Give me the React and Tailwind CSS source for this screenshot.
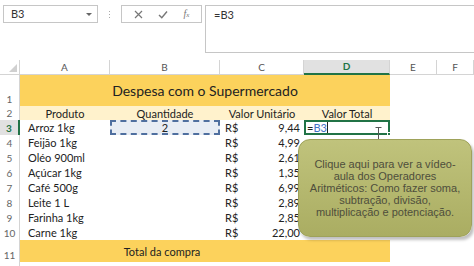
import React from 'react';

const items = [
  { name: 'Arroz 1kg', price: '9,44' },
  { name: 'Feijão 1kg', price: '4,99' },
  { name: 'Oléo 900ml', price: '2,61' },
  { name: 'Açúcar 1kg', price: '1,35' },
  { name: 'Café 500g', price: '6,99' },
  { name: 'Leite 1 L', price: '2,89' },
  { name: 'Farinha 1kg', price: '2,85' },
  { name: 'Carne 1kg', price: '22,00' },
];

const cols = [
  { key: 'A', w: 'w-[90px]' },
  { key: 'B', w: 'w-[110px]' },
  { key: 'C', w: 'w-[84px]' },
  { key: 'D', w: 'w-[86px]' },
  { key: 'E', w: 'w-[47px]' },
  { key: 'F', w: 'w-[37px]' },
];

function RowNum({ n, active, bottom }) {
  return (
    <div
      className={`w-[20px] shrink-0 flex justify-center text-[10px] leading-none ${
        bottom ? 'items-end pb-[2px]' : 'items-center'
      } ${
        active
          ? 'bg-[#e1e1e1] text-[#217346] font-bold border-r-2 border-[#217346]'
          : 'text-[#666] border-r border-[#d4d4d4]'
      }`}
    >
      {n}
    </div>
  );
}

export default function App() {
  return (
    <div className="w-[474px] h-[266px] overflow-hidden bg-white relative font-['Lato',sans-serif] text-[#222]">
      {/* Formula bar */}
      <div className="flex h-[60px] items-start pt-[5px] pl-[3px]">
        <div className="w-[95px] h-[18px] border border-[#c6c6c6] flex items-center justify-between pl-[7px] pr-[5px] text-[11px] text-[#333]">
          <span>B3</span>
          <span className="w-0 h-0 border-l-[3px] border-r-[3px] border-t-[3px] border-l-transparent border-r-transparent border-t-[#666]" />
        </div>
        <div className="w-[23px] h-[18px] flex flex-col items-center justify-center gap-[2px]">
          <span className="w-[1px] h-[1px] bg-[#aaa]" />
          <span className="w-[1px] h-[1px] bg-[#aaa]" />
          <span className="w-[1px] h-[1px] bg-[#aaa]" />
        </div>
        <div className="w-[81px] h-[18px] border border-[#c6c6c6] flex items-center justify-around px-[4px] text-[#777]">
          <svg width="9" height="9" viewBox="0 0 9 9">
            <path d="M1 1 L8 8 M8 1 L1 8" stroke="#777" strokeWidth="1.2" />
          </svg>
          <svg width="10" height="9" viewBox="0 0 10 9">
            <path d="M1 5 L3.8 7.8 L9 1.5" stroke="#777" strokeWidth="1.4" fill="none" />
          </svg>
          <span className="font-['Liberation_Serif',serif] italic text-[10px] leading-none">
            f<span className="text-[7px]">x</span>
          </span>
        </div>
        <div className="ml-[3px] flex-1 h-[48px] border border-r-0 border-[#c6c6c6] pl-[8px] pt-[1px] text-[11px] text-[#333]">
          =B3
        </div>
      </div>

      {/* Column headers */}
      <div className="flex h-[15px]">
        <div className="w-[20px] shrink-0 flex items-end justify-end pr-[2px] pb-[2px] border-r border-b border-[#d4d4d4]">
          <svg width="8" height="8" viewBox="0 0 8 8">
            <path d="M8 0 L8 8 L0 8 Z" fill="#d0d0d0" />
          </svg>
        </div>
        {cols.map((c) => (
          <div
            key={c.key}
            className={`${c.w} shrink-0 flex items-center justify-center text-[10px] ${
              c.key === 'D'
                ? 'bg-[#e1e1e1] text-[#217346] font-bold border-b-2 border-[#217346] border-r border-r-[#d4d4d4]'
                : 'text-[#555] border-r border-b border-[#d4d4d4]'
            }`}
          >
            {c.key}
          </div>
        ))}
      </div>

      {/* Row 1 */}
      <div className="flex h-[31px]">
        <RowNum n={1} bottom />
        <div className="w-[370px] shrink-0 bg-[#fcd25c] flex items-center justify-center text-[14px] text-[#222]">
          Despesa com o Supermercado
        </div>
      </div>

      {/* Row 2 */}
      <div className="flex h-[14px] text-[11px] leading-none">
        <RowNum n={2} />
        <div className="w-[90px] shrink-0 bg-[#fff2cc] flex items-center justify-center">Produto</div>
        <div className="w-[110px] shrink-0 bg-[#fff2cc] flex items-center justify-center">Quantidade</div>
        <div className="w-[84px] shrink-0 bg-[#fff2cc] flex items-center justify-center">Valor Unitário</div>
        <div className="w-[86px] shrink-0 bg-[#fff2cc] flex items-center justify-center">Valor Total</div>
      </div>

      {/* Rows 3-10 */}
      {items.map((it, i) => {
        const first = i === 0;
        return (
          <div key={it.name} className="flex h-[15px] text-[11px] leading-none">
            <RowNum n={i + 3} active={first} />
            <div className="w-[90px] shrink-0 flex items-center pl-[8px]">{it.name}</div>
            {first ? (
              <div className="w-[110px] shrink-0 flex items-center justify-center border-2 border-dashed border-[#4f6f9f] bg-[#e8edf4]">
                2
              </div>
            ) : (
              <div className="w-[110px] shrink-0" />
            )}
            <div className="w-[84px] shrink-0 flex items-center justify-between pl-[5px] pr-[4px]">
              <span>R$</span>
              <span>{it.price}</span>
            </div>
            {first ? (
              <div className="w-[86px] shrink-0 flex items-center border-2 border-[#217346] pl-[1px] relative">
                <span>=</span>
                <span className="text-[#4472c4]">B3</span>
                <span className="w-[1px] h-[11px] bg-[#222]" />
                <span className="absolute -right-[3px] -bottom-[3px] w-[4px] h-[4px] bg-[#217346] border border-white" />
              </div>
            ) : (
              <div className="w-[86px] shrink-0" />
            )}
          </div>
        );
      })}

      {/* Row 11 */}
      <div className="flex h-[22px] text-[11px] leading-none">
        <RowNum n={11} bottom />
        <div className="w-[284px] shrink-0 bg-[#fcd25c] flex items-center justify-center">Total da compra</div>
        <div className="w-[86px] shrink-0 bg-[#fcd25c]" />
      </div>

      {/* Row 12 */}
      <div className="flex h-[10px]">
        <RowNum n="" />
      </div>

      {/* Text cursor */}
      <svg className="absolute left-[375px] top-[127px]" width="7" height="13" viewBox="0 0 7 13">
        <path d="M0.5 0.5 H6.5 M3.5 0.5 V12.5 M0.5 12.5 H6.5" stroke="#555" strokeWidth="1" fill="none" />
      </svg>

      {/* Callout */}
      <div className="absolute left-[298px] top-[139px] w-[174px] h-[98px] rounded-[12px] border border-[#9ea25a] bg-gradient-to-b from-[#c0c37c] to-[#aaad62] shadow-[2px_3px_3px_rgba(0,0,0,0.25)] flex items-center justify-center text-center font-['Liberation_Sans',Arial,sans-serif] text-[11px] leading-[12px] text-[#4e4e3c]">
        <p>
          Clique aqui para ver a vídeo-
          <br />
          aula dos Operadores
          <br />
          Aritméticos: Como fazer soma,
          <br />
          subtração, divisão,
          <br />
          multiplicação e potenciação.
        </p>
      </div>
    </div>
  );
}
